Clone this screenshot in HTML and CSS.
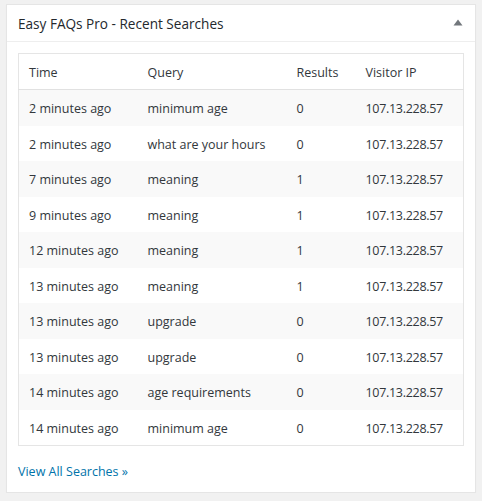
FILE: index.html
```html
<!DOCTYPE html>
<html lang="en">
<head>
<meta charset="utf-8">
<title>Easy FAQs Pro - Recent Searches</title>
<link rel="stylesheet" href="styles.css">
</head>
<body>
<div class="postbox">
  <div class="postbox-header">
    <h2 class="hndle">Easy FAQs Pro - Recent Searches</h2>
    <span class="toggle" aria-hidden="true"><svg width="10" height="7" viewBox="0 0 10 7"><path d="M0.5 6.5 L5 0.5 L9.5 6.5 Z" fill="#72777c"/></svg></span>
  </div>
  <div class="inside">
    <table class="widefat">
      <colgroup>
        <col class="c-time"><col class="c-query"><col class="c-results"><col class="c-ip">
      </colgroup>
      <thead>
        <tr><th>Time</th><th>Query</th><th>Results</th><th>Visitor IP</th></tr>
      </thead>
      <tbody>
        <tr><td>2 minutes ago</td><td>minimum age</td><td>0</td><td class="ip">107.13.228.57</td></tr>
        <tr><td>2 minutes ago</td><td>what are your hours</td><td>0</td><td class="ip">107.13.228.57</td></tr>
        <tr><td>7 minutes ago</td><td>meaning</td><td>1</td><td class="ip">107.13.228.57</td></tr>
        <tr><td>9 minutes ago</td><td>meaning</td><td>1</td><td class="ip">107.13.228.57</td></tr>
        <tr><td>12 minutes ago</td><td>meaning</td><td>1</td><td class="ip">107.13.228.57</td></tr>
        <tr><td>13 minutes ago</td><td>meaning</td><td>1</td><td class="ip">107.13.228.57</td></tr>
        <tr><td>13 minutes ago</td><td>upgrade</td><td>0</td><td class="ip">107.13.228.57</td></tr>
        <tr><td>13 minutes ago</td><td>upgrade</td><td>0</td><td class="ip">107.13.228.57</td></tr>
        <tr><td>14 minutes ago</td><td>age requirements</td><td>0</td><td class="ip">107.13.228.57</td></tr>
        <tr><td>14 minutes ago</td><td>minimum age</td><td>0</td><td class="ip">107.13.228.57</td></tr>
      </tbody>
    </table>
    <p class="more"><a href="#">View All Searches &raquo;</a></p>
  </div>
</div>
</body>
</html>
```
FILE: styles.css
```css
html, body {
  margin: 0;
  padding: 0;
}
body {
  background: #f1f1f1;
  padding: 4px 6px 0 6px;
  font-family: "Open Sans", "Noto Sans", sans-serif;
  font-size: 12.5px;
  color: #32373c;
}
.postbox {
  background: #fff;
  border: 1px solid #e5e5e5;
  box-shadow: 0 1px 1px rgba(0, 0, 0, 0.04);
  width: 468px;
  height: 487px;
}
.postbox-header {
  display: flex;
  align-items: center;
  justify-content: space-between;
  height: 36px;
  border-bottom: 1px solid #eee;
  padding: 0 12px 0 11px;
}
.hndle {
  margin: 0;
  padding-top: 2px;
  font-size: 13.6px;
  font-weight: 400;
  color: #23282d;
  line-height: 19.6px;
}
.toggle {
  display: flex;
  width: 10px;
  height: 7px;
  margin-top: -2px;
}
.inside {
  padding: 11px 11px 0 11px;
}
.widefat {
  width: 100%;
  border-collapse: collapse;
  border: 1px solid #e5e5e5;
  table-layout: fixed;
}
.c-time { width: 119px; }
.c-query { width: 149px; }
.c-results { width: 69px; }
.c-ip { width: auto; }
.widefat th {
  text-align: left;
  font-weight: 400;
  padding: 9px 10px 7px 10px;
  line-height: 19px;
  border-bottom: 1px solid #e1e1e1;
  color: #32373c;
  white-space: nowrap;
}
.widefat td {
  padding: 9px 10px 7px 10px;
  line-height: 19.5px;
  color: #32373c;
  white-space: nowrap;
}
.widefat td.ip {
  letter-spacing: -0.3px;
}
.widefat tbody tr:nth-child(odd) {
  background: #f9f9f9;
}
.more {
  margin: 16px 0 0 0;
  line-height: 19.5px;
}
.more a {
  color: #0073aa;
  text-decoration: none;
}
```
